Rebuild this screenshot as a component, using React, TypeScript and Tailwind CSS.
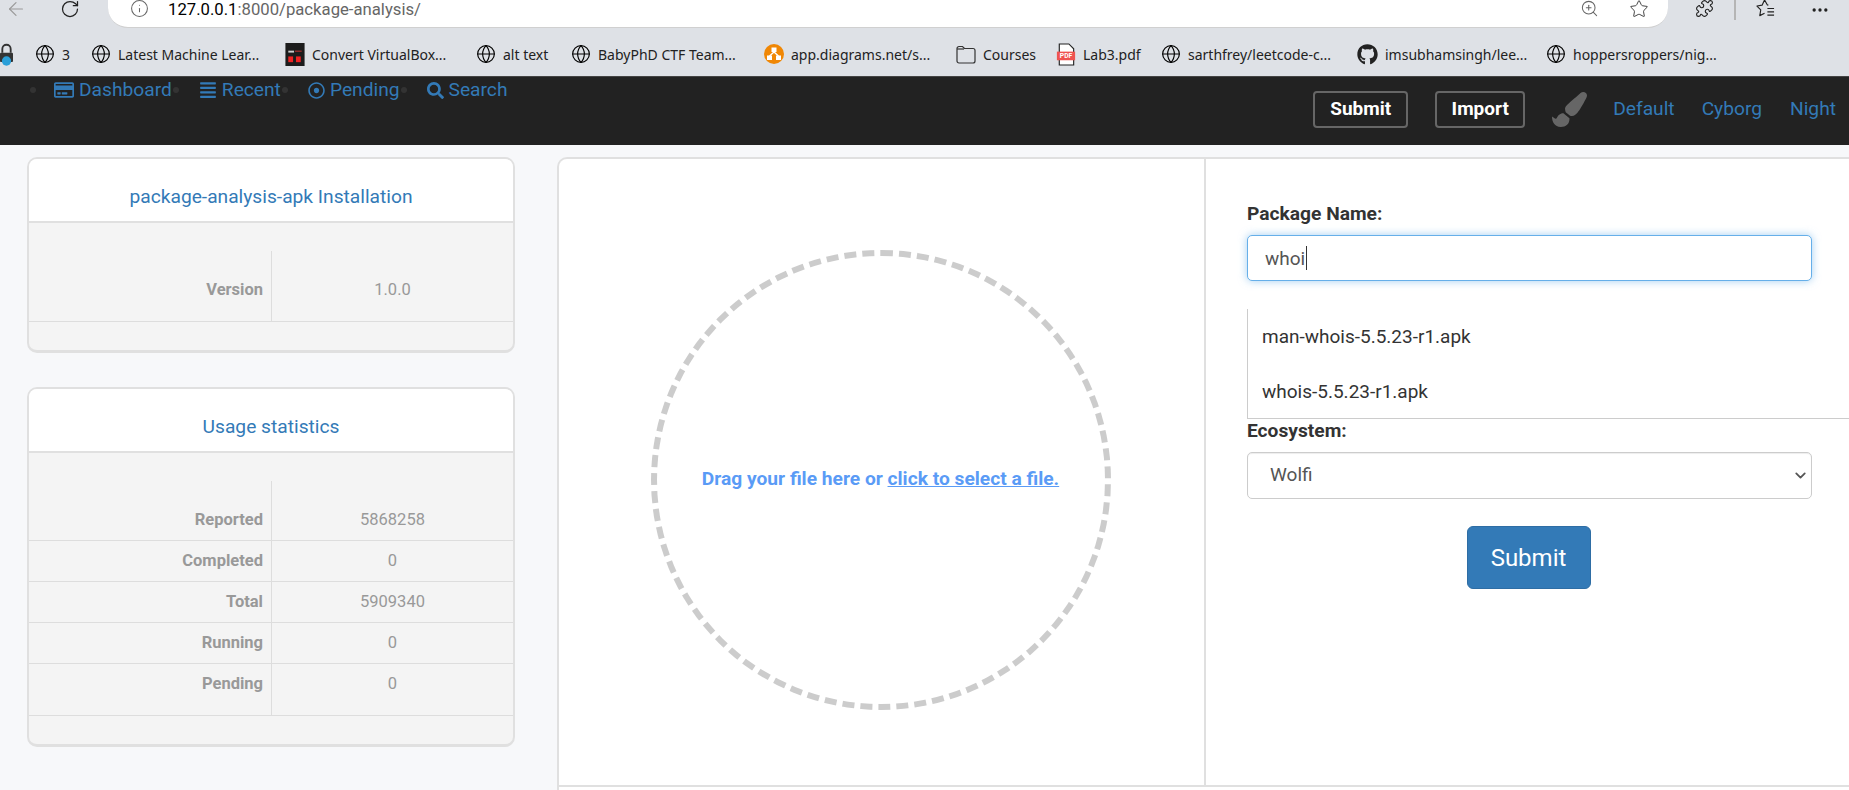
import React from 'react';
import { ArrowLeft, RotateCw, Info, ZoomIn, Star, Puzzle, MoreHorizontal, Globe, ChevronDown } from 'lucide-react';
import { FaRegCreditCard, FaAlignJustify, FaRegDotCircle, FaSearch, FaPaintBrush, FaGithub } from 'react-icons/fa';

const GlobeIcon = () => <Globe className="w-[20px] h-[20px] text-black shrink-0" strokeWidth={1.4} />;

const VboxIcon = () => (
  <svg viewBox="0 0 20 24" className="w-[20px] h-[23px] shrink-0">
    <rect width="20" height="24" fill="#1c1c1c" />
    <rect x="3" y="8" width="6" height="2" fill="#ccc" />
    <rect x="10" y="8" width="7" height="1" fill="#c33" />
    <rect x="3" y="14" width="5" height="6" fill="#e22" />
    <rect x="11" y="14" width="5" height="6" fill="#e22" />
  </svg>
);

const DiagramsIcon = () => (
  <svg viewBox="0 0 20 20" className="w-[20px] h-[20px] shrink-0">
    <circle cx="10" cy="10" r="10" fill="#f08705" />
    <rect x="7.5" y="3.5" width="5" height="4.5" fill="#fff" />
    <rect x="3" y="11.5" width="5" height="4.5" fill="#fff" />
    <rect x="12" y="11.5" width="5" height="4.5" fill="#fff" />
    <path d="M10 8 L5.5 12 M10 8 L14.5 12" stroke="#fff" strokeWidth="1.4" />
  </svg>
);

const FolderIcon = () => (
  <svg viewBox="0 0 20 20" fill="none" className="w-[20px] h-[20px] shrink-0">
    <path d="M1 4.5a2 2 0 0 1 2-2h3.5l2 2H17a2 2 0 0 1 2 2V17a2 2 0 0 1-2 2H3a2 2 0 0 1-2-2V4.5Z" stroke="#333" strokeWidth="1.2" />
    <path d="M1 5h7" stroke="#333" strokeWidth="1.2" />
  </svg>
);

const PdfIcon = () => (
  <svg viewBox="0 0 20 24" className="w-[20px] h-[23px] shrink-0">
    <path d="M3 1h10l5 5v17H3Z" fill="#fff" stroke="#222" strokeWidth="1.2" />
    <rect x="0.5" y="9" width="19" height="9" fill="#ef5350" />
    <text x="10" y="16" fontSize="7" fontWeight="700" fill="#fff" textAnchor="middle" fontFamily="Roboto, sans-serif">PDF</text>
  </svg>
);

const LockIcon = () => (
  <svg viewBox="0 0 14 24" className="w-[13px] h-[23px] shrink-0">
    <path d="M2.5 10V6a4.5 4.5 0 0 1 9 0v4" fill="none" stroke="#333" strokeWidth="2" />
    <rect x="0" y="10" width="14" height="10" rx="1" fill="#333" />
    <circle cx="7" cy="19" r="5" fill="#2a9fd8" />
  </svg>
);

const FavoritesIcon = () => (
  <svg viewBox="0 0 20 20" fill="none" stroke="#222" strokeWidth="1.2" className="w-[19px] h-[19px] shrink-0">
    <path d="M13 6.5 L12 6.3 L9 1 L6.4 6.5 L1 7.4 L5 11.5 L4 17.5 L9 15" strokeLinejoin="round" />
    <path d="M12 10h7M12 13.5h7M12 17h7" />
  </svg>
);

const bookmarks = [
  { icon: <GlobeIcon />, label: '3', w: 'w-[56px]' },
  { icon: <GlobeIcon />, label: 'Latest Machine Lear...', w: 'w-[194px]' },
  { icon: <VboxIcon />, label: 'Convert VirtualBox...', w: 'w-[191px]' },
  { icon: <GlobeIcon />, label: 'alt text', w: 'w-[95px]' },
  { icon: <GlobeIcon />, label: 'BabyPhD CTF Team...', w: 'w-[193px]' },
  { icon: <DiagramsIcon />, label: 'app.diagrams.net/s...', w: 'w-[192px]' },
  { icon: <FolderIcon />, label: 'Courses', w: 'w-[100px]' },
  { icon: <PdfIcon />, label: 'Lab3.pdf', w: 'w-[105px]' },
  { icon: <GlobeIcon />, label: 'sarthfrey/leetcode-c...', w: 'w-[196px]' },
  { icon: <FaGithub className="w-[21px] h-[21px] text-[#222] shrink-0" />, label: 'imsubhamsingh/lee...', w: 'w-[189px]' },
  { icon: <GlobeIcon />, label: 'hoppersroppers/nig...', w: 'w-[200px]' },
];

const navLinks = [
  { icon: <FaRegCreditCard className="w-[20px] h-[20px]" />, label: 'Dashboard' },
  { icon: <FaAlignJustify className="w-[18px] h-[18px]" />, label: 'Recent' },
  { icon: <FaRegDotCircle className="w-[17px] h-[17px]" />, label: 'Pending' },
  { icon: <FaSearch className="w-[17px] h-[17px]" />, label: 'Search' },
];

function InfoCard({ title, rows }: { title: string; rows: { k: string; v: string; h: string; p: string }[] }) {
  return (
    <div className="border-2 border-[#e0e0e0] border-b-[3px] rounded-[10px] overflow-hidden bg-[#f4f4f4]">
      <div className="bg-white h-[64px] pt-[24px] border-b-2 border-[#e0e0e0] text-center text-[19.2px] leading-[28px] text-[#337ab7]">
        {title}
      </div>
      <div className="py-[28px]">
        <div className="border-b border-[#dddddd]">
          {rows.map((r, i) => (
            <div key={r.k} className={`grid grid-cols-[243px_1fr] ${r.h} ${i > 0 ? 'border-t border-[#dddddd]' : ''}`}>
              <div className={`border-r border-[#dddddd] text-right pr-[8px] font-bold text-[#999999] text-[16.5px] leading-[24px] ${r.p}`}>{r.k}</div>
              <div className={`text-center text-[#999999] text-[16.5px] leading-[24px] ${r.p}`}>{r.v}</div>
            </div>
          ))}
        </div>
      </div>
    </div>
  );
}

export default function App() {
  return (
    <div className="h-[790px] overflow-hidden bg-[#f7f8fa] font-['Roboto',sans-serif]">
      {/* browser chrome */}
      <div className="h-[28px] bg-[#dee1e6] flex overflow-hidden items-start">
        <ArrowLeft className="w-[22px] h-[22px] ml-[5px] -mt-[2px] text-[#9a9a9a] shrink-0" strokeWidth={1.3} />
        <RotateCw className="w-[20px] h-[20px] ml-[33px] -mt-[1px] text-[#222] shrink-0" strokeWidth={1.5} />
        <div className="ml-[28px] w-[1560px] h-[28px] bg-white rounded-b-[20px] border-b border-[#d0d0d0] flex items-start pl-[22px] pr-[19px] shrink-0">
          <Info className="w-[19px] h-[19px] -mt-[1px] text-[#666] shrink-0" strokeWidth={1.3} />
          <span className="ml-[19px] mt-[1px] text-[16.7px] leading-[18px] text-[#666]">
            <span className="text-black">127.0.0.1</span>:8000/package-analysis/
          </span>
          <ZoomIn className="w-[19px] h-[19px] ml-auto -mt-[1px] text-[#666]" strokeWidth={1.3} />
          <Star className="w-[20px] h-[20px] ml-[30px] -mt-[1px] text-[#444]" strokeWidth={1.2} />
        </div>
        <Puzzle className="w-[19px] h-[19px] ml-[27px] -mt-[1px] text-[#222] shrink-0" strokeWidth={1.4} />
        <div className="w-[2px] h-[20px] ml-[20px] bg-[#b5b5b5] shrink-0" />
        <div className="ml-[20px] -mt-[1px]">
          <FavoritesIcon />
        </div>
        <MoreHorizontal className="w-[20px] h-[20px] ml-[35px] text-[#222] shrink-0" strokeWidth={2} />
      </div>
      <div className="h-[48px] pt-[4px] bg-[#dee1e6] flex items-center text-[14px] text-[#222] whitespace-nowrap font-['Noto_Sans',sans-serif] overflow-hidden">
        <LockIcon />
        <div className="w-[22px] shrink-0" />
        {bookmarks.map((b) => (
          <div key={b.label} className={`flex items-center gap-[7px] shrink-0 ${b.w}`}>
            {b.icon}
            <span>{b.label}</span>
          </div>
        ))}
      </div>

      {/* app nav */}
      <nav className="h-[69px] bg-[#222222] border-t border-[#444] flex items-start justify-between">
        <div className="flex items-center h-[26px] pl-[30px] text-[#337ab7] text-[19.2px]">
          <span className="w-[6px] h-[6px] rounded-full bg-[#333] mr-[18px]" />
          {navLinks.map((l, i) => (
            <div key={l.label} className="flex items-center">
              <div className="flex items-center gap-[5px]">
                {l.icon}
                <span>{l.label}</span>
              </div>
              {i < 3 && <span className="w-[6px] h-[6px] rounded-full bg-[#333] ml-[1px] mr-[20px]" />}
            </div>
          ))}
        </div>
        <div className="flex items-center mt-[14px] pr-[13px] text-[19.2px]">
          <button className="w-[95px] h-[37px] border-2 border-[#666] rounded-[4px] text-white font-bold text-[19px]">Submit</button>
          <button className="w-[90px] h-[37px] ml-[27px] border-2 border-[#666] rounded-[4px] text-white font-bold text-[19px]">Import</button>
          <FaPaintBrush className="w-[35px] h-[35px] ml-[27px] text-[#666]" />
          <span className="ml-[26px] text-[#337ab7]">Default</span>
          <span className="ml-[27px] text-[#337ab7]">Cyborg</span>
          <span className="ml-[28px] text-[#337ab7]">Night</span>
        </div>
      </nav>

      {/* page body */}
      <main className="flex gap-[42px] pl-[27px] pt-[12px] items-start">
        <div className="w-[488px] shrink-0 flex flex-col gap-[34px]">
          <InfoCard title="package-analysis-apk Installation" rows={[{ k: 'Version', v: '1.0.0', h: 'h-[70px]', p: 'pt-[27px]' }]} />
          <InfoCard
            title="Usage statistics"
            rows={[
              { k: 'Reported', v: '5868258', h: 'h-[59px]', p: 'pt-[27px]' },
              { k: 'Completed', v: '0', h: 'h-[41px]', p: 'pt-[8px]' },
              { k: 'Total', v: '5909340', h: 'h-[41px]', p: 'pt-[8px]' },
              { k: 'Running', v: '0', h: 'h-[41px]', p: 'pt-[8px]' },
              { k: 'Pending', v: '0', h: 'h-[52px]', p: 'pt-[8px]' },
            ]}
          />
        </div>

        {/* card runs past the window bottom, the line at 785 belongs to its first section */}
        <div className="flex-1 h-[660px] bg-white border-2 border-r-0 border-b-0 border-[#e0e0e0] rounded-tl-[10px]">
          <div className="h-[628px] border-b-2 border-[#e0e0e0] flex">
            <div className="w-[647px] shrink-0 pt-[15px] pr-[2px] border-r-2 border-[#e0e0e0] flex items-center justify-center">
              <div className="w-[460px] h-[460px] rounded-full border-[6px] border-dashed border-[#cccccc] flex items-center justify-center text-[19.2px] font-bold text-[#5a9bf6] whitespace-nowrap">
                <span>
                  Drag your file here or <span className="underline">click to select a file.</span>
                </span>
              </div>
            </div>
            <div className="flex-1 pl-[41px] pt-[42px]">
              <label className="block font-bold text-[19.2px] leading-[26px] text-[#333]">Package Name:</label>
              <div className="relative mt-[8px] w-[565px]">
                <input
                  readOnly
                  value="whoi"
                  className="w-full h-[46px] px-[17px] text-[19px] text-[#555] bg-white border border-[#66afe9] rounded-[5px] outline-none shadow-[0_0_8px_rgba(102,175,233,0.6)]"
                />
                <span className="absolute left-[59px] top-[11px] w-[1px] h-[24px] bg-[#333]" />
              </div>
              <div className="mt-[28px] h-[110px] border-l border-b border-[#cccccc] pl-[14px] text-[19px] text-[#333]">
                <div className="h-[55px] pt-[14px]">man-whois-5.5.23-r1.apk</div>
                <div className="h-[55px] pt-[14px]">whois-5.5.23-r1.apk</div>
              </div>
              <label className="block font-bold text-[19.2px] leading-[23px] text-[#333]">Ecosystem:</label>
              <div className="relative mt-[10px] w-[565px]">
                <select className="w-full h-[47px] pl-[22px] text-[19px] text-[#555] bg-white border border-[#cccccc] rounded-[5px] outline-none appearance-none shadow-[inset_0_1px_1px_rgba(0,0,0,0.075)]">
                  <option>Wolfi</option>
                </select>
                <ChevronDown className="absolute right-[3px] top-[15px] w-[17px] h-[17px] text-[#555] pointer-events-none" strokeWidth={2.5} />
              </div>
              <div className="w-[563px] flex justify-center mt-[27px]">
                <button className="w-[124px] h-[63px] bg-[#337ab7] border border-[#2e6da4] rounded-[6px] text-white text-[24px]">Submit</button>
              </div>
            </div>
          </div>
        </div>
      </main>
    </div>
  );
}
